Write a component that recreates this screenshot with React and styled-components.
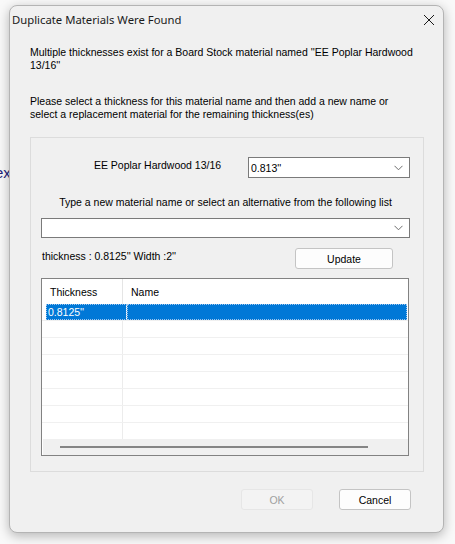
import React from "react";
import styled, { createGlobalStyle } from "styled-components";

const GlobalStyle = createGlobalStyle`
  html, body {
    margin: 0;
    padding: 0;
    background: #f9f9f9;
  }
  body {
    width: 455px;
    height: 544px;
    overflow: hidden;
    font-family: "Liberation Sans", Arial, sans-serif;
  }
`;

const Page = styled.div`
  position: relative;
  width: 455px;
  height: 544px;
  padding: 5px 0 0 9px;
  box-sizing: border-box;
`;

const BehindText = styled.span`
  position: absolute;
  left: -5px;
  top: 164px;
  font-family: "Liberation Sans", Arial, sans-serif;
  font-size: 15px;
  color: #1f1f7a;
`;

const Dialog = styled.div`
  position: relative;
  width: 435px;
  height: 528px;
  box-sizing: border-box;
  background: #f0f0f0;
  border: 1px solid #b4b4b4;
  border-radius: 8px;
  box-shadow: 0 3px 12px rgba(0, 0, 0, 0.28);
  display: flex;
  flex-direction: column;
`;

const TitleBar = styled.div`
  height: 26px;
  display: flex;
  align-items: center;
  justify-content: space-between;
  padding: 0 8px 0 2px;
`;

const Title = styled.span`
  font-family: "Noto Sans", "Open Sans", sans-serif;
  font-size: 11.3px;
  color: #1a1a1a;
`;

const CloseButton = styled.div`
  width: 12px;
  height: 12px;
  display: flex;
  margin-top: 1px;
`;

const Body = styled.div`
  flex: 1;
  display: flex;
  flex-direction: column;
  padding: 0 19px 0 20px;
  font-size: 10.5px;
`;

const Text = styled.p`
  margin: ${({ $top }) => $top}px 0 0 0;
  line-height: 13px;
  color: #000;
  white-space: nowrap;
`;

const Group = styled.div`
  margin-top: 16px;
  height: 335px;
  box-sizing: border-box;
  border: 1px solid #dcdcdc;
  padding: 19px 13px 14px 10px;
  display: flex;
  flex-direction: column;
`;

const Row = styled.div`
  display: flex;
  align-items: ${({ $align }) => $align || "center"};
  justify-content: space-between;
  margin-top: ${({ $top }) => $top || 0}px;
`;

const Label = styled.div`
  width: 207px;
  box-sizing: border-box;
  padding: 2px 0 0 26px;
  text-align: center;
  line-height: 13px;
`;

const Combo = styled.div`
  width: ${({ $width }) => $width}px;
  height: ${({ $height }) => $height || 21}px;
  box-sizing: border-box;
  margin-top: ${({ $top }) => $top || 0}px;
  background: #fff;
  border: 1px solid #7a7a7a;
  display: flex;
  align-items: center;
  justify-content: space-between;
  padding: 0 6px 0 2px;
  color: #000;
`;

const Chevron = () => (
  <svg width="9" height="6" viewBox="0 0 9 6">
    <path d="M0.5 0.8 L4.5 4.8 L8.5 0.8" fill="none" stroke="#6e6e6e" strokeWidth="1" />
  </svg>
);

const Centered = styled.div`
  margin-top: 18px;
  text-align: center;
  line-height: 13px;
`;

const InfoText = styled.span`
  padding: 1px 0 0 1px;
  line-height: 13px;
  align-self: flex-start;
  margin-top: 1px;
`;

const Button = styled.div`
  width: ${({ $width }) => $width}px;
  height: 21px;
  box-sizing: border-box;
  border: 1px solid ${({ $disabled }) => ($disabled ? "#e6e6e6" : "#c4c4c4")};
  border-radius: 3px;
  background: ${({ $disabled }) => ($disabled ? "#f3f3f3" : "#fdfdfd")};
  color: ${({ $disabled }) => ($disabled ? "#a0a0a0" : "#000")};
  display: flex;
  align-items: center;
  justify-content: center;
  margin-right: ${({ $right }) => $right || 0}px;
`;

const List = styled.div`
  margin-top: 9px;
  width: 368px;
  height: 178px;
  box-sizing: border-box;
  border: 1px solid #828282;
  background: #fff;
  display: flex;
  flex-direction: column;
`;

const Header = styled.div`
  height: 25px;
  flex: none;
  display: grid;
  grid-template-columns: 81px 1fr;
`;

const HeaderCell = styled.div`
  display: flex;
  align-items: center;
  padding-left: 8px;
  padding-top: 1px;
  border-right: ${({ $divider }) => ($divider ? "1px solid #e5e5e5" : "none")};
`;

const Rows = styled.div`
  height: 135px;
  overflow: hidden;
  flex: none;
`;

const ListRow = styled.div`
  height: 17px;
  box-sizing: border-box;
  display: grid;
  grid-template-columns: 81px 1fr;
  border-bottom: 1px solid #f0f0f0;
  padding-left: ${({ $selected }) => ($selected ? 4 : 0)}px;
  padding-right: 1px;
`;

const Cell = styled.div`
  display: flex;
  align-items: center;
  padding-left: 2px;
  border-right: ${({ $divider }) => ($divider ? "1px solid #ececec" : "none")};
  background: ${({ $selected }) => ($selected ? "#0078d7" : "transparent")};
  color: ${({ $selected }) => ($selected ? "#fff" : "#000")};
  outline: ${({ $selected }) => ($selected ? "1px dotted #9fc6ee" : "none")};
  outline-offset: -1px;
  ${({ $selected, $divider }) => ($selected && $divider ? "border-right: 1px solid #fff;" : "")}
`;

const Scrollbar = styled.div`
  flex: 1;
  background: #f0f0f0;
  margin-left: 1px;
  display: flex;
  align-items: center;
  padding-left: 17px;
`;

const Thumb = styled.div`
  width: 308px;
  height: 2px;
  background: #858585;
  margin-top: -1px;
`;

const Footer = styled.div`
  margin-top: 17px;
  display: flex;
  justify-content: flex-end;
  gap: 26px;
  padding-right: 13px;
`;

export default function App() {
  return (
    <>
      <GlobalStyle />
      <Page>
        <BehindText>ex</BehindText>
        <Dialog>
          <TitleBar>
            <Title>Duplicate Materials Were Found</Title>
            <CloseButton>
              <svg width="12" height="12" viewBox="0 0 12 12">
                <path d="M1 1 L11 11 M11 1 L1 11" stroke="#1a1a1a" strokeWidth="1" />
              </svg>
            </CloseButton>
          </TitleBar>
          <Body>
            <Text $top={14}>
              Multiple thicknesses exist for a Board Stock material named ''EE Poplar Hardwood
              <br />
              13/16''
            </Text>
            <Text $top={23}>
              Please select a thickness for this material name and then add a new name or
              <br />
              select a replacement material for the remaining thickness(es)
            </Text>
            <Group>
              <Row $align="flex-start">
                <Label>EE Poplar Hardwood 13/16</Label>
                <Combo $width={162}>
                  <span>0.813''</span>
                  <Chevron />
                </Combo>
              </Row>
              <Centered>Type a new material name or select an alternative from the following list</Centered>
              <Combo $width={369} $height={20} $top={9}>
                <span />
                <Chevron />
              </Combo>
              <Row $align="flex-start" $top={10}>
                <InfoText>thickness : 0.8125'' Width :2''</InfoText>
                <Button $width={98} $right={17}>Update</Button>
              </Row>
              <List>
                <Header>
                  <HeaderCell $divider>Thickness</HeaderCell>
                  <HeaderCell>Name</HeaderCell>
                </Header>
                <Rows>
                  <ListRow $selected>
                    <Cell $selected $divider>0.8125''</Cell>
                    <Cell $selected />
                  </ListRow>
                  {Array.from({ length: 7 }).map((_, i) => (
                    <ListRow key={i}>
                      <Cell $divider />
                      <Cell />
                    </ListRow>
                  ))}
                </Rows>
                <Scrollbar>
                  <Thumb />
                </Scrollbar>
              </List>
            </Group>
            <Footer>
              <Button $width={72} $disabled>OK</Button>
              <Button $width={72}>Cancel</Button>
            </Footer>
          </Body>
        </Dialog>
      </Page>
    </>
  );
}
